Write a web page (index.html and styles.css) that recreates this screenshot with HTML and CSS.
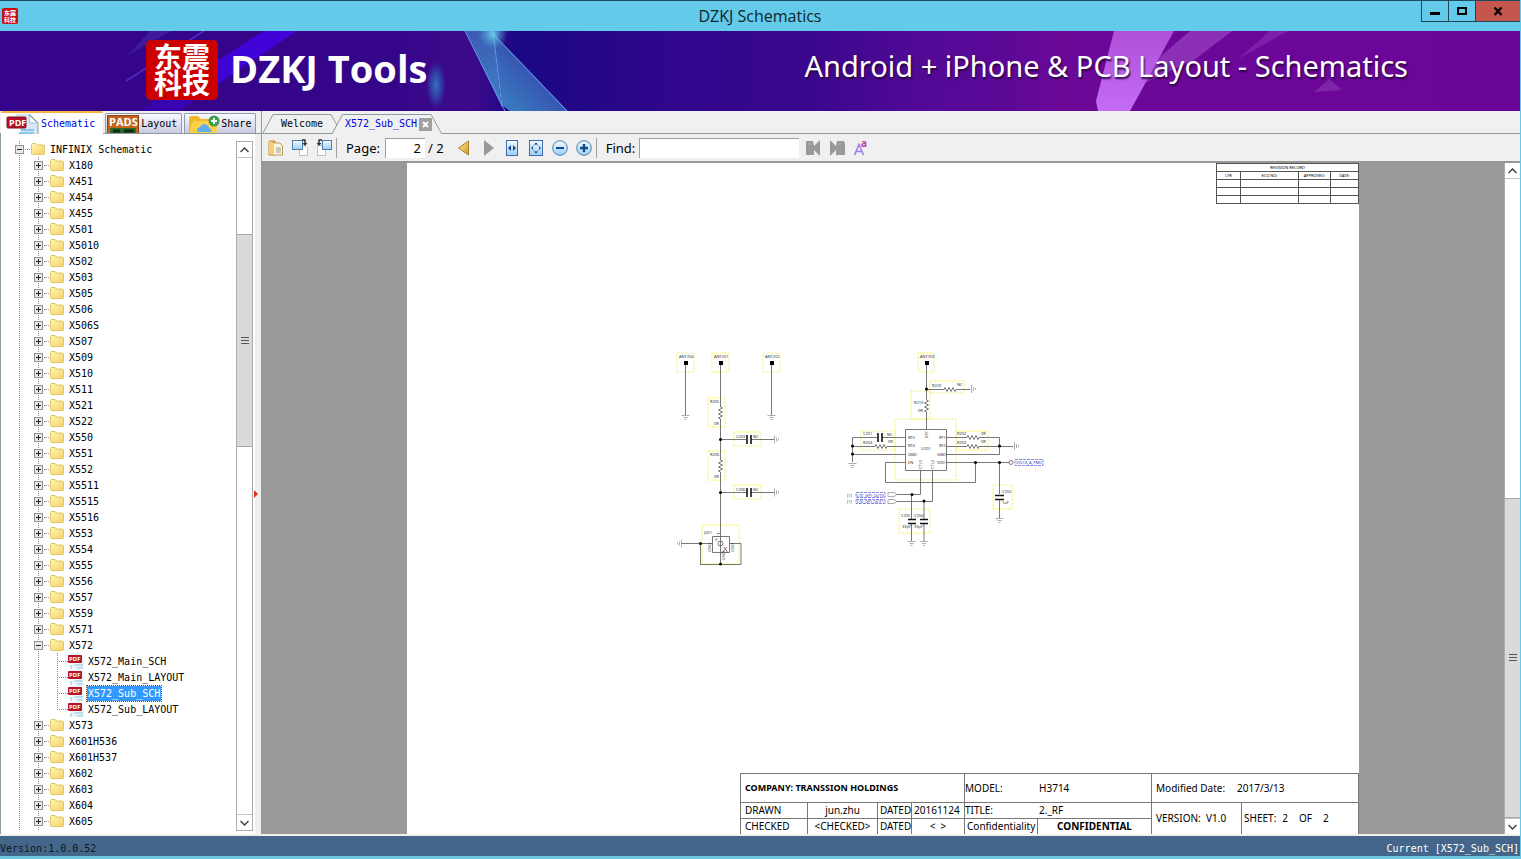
FILE: index.html
```html
<!DOCTYPE html>
<html lang="en">
<head>
    <meta charset="utf-8" />
    <title>DZKJ Schematics</title>
    <link rel="stylesheet" href="styles.css">
</head>
<body>
    <!-- shared icons -->
    <svg class="defs" width="0" height="0">
        <linearGradient id="folderFill" x1="0" y1="0" x2="1" y2="1">
            <stop offset="0" stop-color="#fff6b4" />
            <stop offset="1" stop-color="#f3d268" />
        </linearGradient>
        <linearGradient id="pageFill" x1="0" y1="0" x2="0" y2="1">
            <stop offset="0" stop-color="#f4fbff" />
            <stop offset="1" stop-color="#9dcdf5" />
        </linearGradient>
        <linearGradient id="goldFill" x1="0" y1="0" x2="1" y2="1">
            <stop offset="0" stop-color="#ffe9a0" />
            <stop offset="1" stop-color="#d09a28" />
        </linearGradient>
        <symbol id="folder" viewBox="0 0 14 12">
            <path d="M.5 10.500V1.500Q.5.500 1.500.500H5L6.500 2H12.500Q13.500 2 13.500 3V10.500Q13.500 11.500 12.500 11.500H1.500Q.5 11.500.5 10.500Z" fill="url(#folderFill)" stroke="#e4c468" />
        </symbol>
        <symbol id="pdf" viewBox="0 0 16 16">
            <path d="M3 0H12L15.500 3V15.500H3Z" fill="#e4f4fb" />
            <path d="M3 12V16M7 12H15M9 15H15" stroke="#8cc4dd" />
            <rect y="2" width="14" height="8" rx="1" fill="#b8122a" />
            <text x="1" y="8" font-size="6" font-weight="700" fill="#fff">PDF</text>
        </symbol>
    </svg>

    <header class="titlebar">
        <svg class="app-icon" width="16" height="16">
            <rect width="16" height="16" rx="2" fill="#cc0a10" />
            <text x="2" y="7">东震</text>
            <text x="2" y="14">科技</text>
        </svg>
        <h1>DZKJ Schematics</h1>
        <div class="window-buttons">
            <button type="button" aria-label="Minimize"><svg width="10" height="10"><rect y="6" width="10" height="3" /></svg></button>
            <button type="button" aria-label="Maximize"><svg width="10" height="10"><rect x="1" y="2" width="8" height="6" fill="none" stroke="#000" stroke-width="2" /></svg></button>
            <button type="button" class="close" aria-label="Close"><svg width="10" height="10"><path d="M1.500 1.500L8.500 9M8.500 1.500L1.500 9" stroke="#000" stroke-width="2.200" /></svg></button>
        </div>
    </header>

    <div class="banner">
        <svg class="banner-art" viewBox="0 0 1520 80" preserveAspectRatio="none">
            <defs>
                <linearGradient id="bannerFill">
                    <stop offset="0" stop-color="#34048a" />
                    <stop offset=".26" stop-color="#350589" />
                    <stop offset=".31" stop-color="#3d0a8c" />
                    <stop offset=".34" stop-color="#1b0784" />
                    <stop offset=".39" stop-color="#240786" />
                    <stop offset=".45" stop-color="#31068d" />
                    <stop offset=".53" stop-color="#39078c" />
                    <stop offset=".61" stop-color="#530a96" />
                    <stop offset=".66" stop-color="#5c0897" />
                    <stop offset=".7" stop-color="#6c0898" />
                    <stop offset="1" stop-color="#6b0599" />
                </linearGradient>
                <linearGradient id="shardBlue" x1="0" y1="0" x2="0" y2="1">
                    <stop offset="0" stop-color="#3c5bb4" />
                    <stop offset="1" stop-color="#3c82c4" />
                </linearGradient>
                <linearGradient id="shardDark" x1="1" y1="0" x2="0" y2="1">
                    <stop offset="0" stop-color="#33259a" />
                    <stop offset="1" stop-color="#3b86c6" />
                </linearGradient>
                <linearGradient id="shardPink" x1="0" y1="0" x2="0" y2="1">
                    <stop offset="0" stop-color="#b04fd8" />
                    <stop offset="1" stop-color="#c46cf4" />
                </linearGradient>
                <linearGradient id="beam" x1="1" y1="0" x2="0" y2="1">
                    <stop offset="0" stop-color="#4103d9" />
                    <stop offset=".6" stop-color="#3c04d4" />
                    <stop offset="1" stop-color="#36049e" />
                </linearGradient>
                <radialGradient id="glow">
                    <stop offset="0" stop-color="#2e74bf" />
                    <stop offset="1" stop-color="#2e74bf" stop-opacity="0" />
                </radialGradient>
                <radialGradient id="spark">
                    <stop offset="0" stop-color="#6fd0e8" />
                    <stop offset="1" stop-color="#4aa0d0" stop-opacity="0" />
                </radialGradient>
            </defs>
            <rect width="1520" height="80" fill="url(#bannerFill)" />
            <path d="M264 0H297L178 80H138Z" fill="url(#beam)" />
            <path d="M150 0H172L128 24Z" fill="#3f1a9a" />
            <path d="M204 0L126 50" stroke="#4a2ac0" stroke-width="2" />
            <path d="M465 0H493L501 74Z" fill="url(#shardBlue)" />
            <path d="M493 2L568 80H510L502 74Z" fill="url(#shardDark)" />
            <path d="M465 0L505 80M493 0L502 76M494 4L567 80" fill="none" stroke="#669af0" stroke-width="1" />
            <ellipse cx="436" cy="54" rx="10" ry="24" fill="url(#glow)" />
            <circle cx="493" cy="3" r="15" fill="url(#spark)" />
            <path d="M1114 0H1174L1130 80H1098L1096 70Z" fill="url(#shardPink)" />
            <path d="M1190 0H1232L1194 29L1136 56L1162 24Z" fill="#b463da" opacity=".45" />
            <path d="M1270 0H1288L1238 28Z" fill="#a050c8" opacity=".35" />
            <path d="M1314 61L1329 48L1342 59Z" fill="#8b38b2" opacity=".6" />
        </svg>
        <div class="logo">东震科技</div>
        <strong class="brand">DZKJ Tools</strong>
        <p class="slogan">Android + iPhone &amp; PCB Layout - Schematics</p>
    </div>

    <div class="main">
        <aside class="side">
            <nav class="side-tabs">
                <button type="button" class="side-tab active">
                    <svg width="34" height="20">
                        <path d="M10 0H24L32 8V20H14V14Z" fill="#d7e8f4" />
                        <path d="M23 0L32 9V20" fill="none" stroke="#8b9aa8" />
                        <path d="M23 1L31 9H24Z" fill="#fff" stroke="#a9bccb" />
                        <path d="M15 16H28M13 19H28" stroke="#8cc6ea" stroke-width="2" />
                        <rect x="1" y="3" width="19" height="11" rx="1" fill="#b90f24" stroke="#7d1422" />
                        <text x="3" y="12" font-size="9" font-weight="700" fill="#fff">PDF</text>
                    </svg>
                    Schematic
                </button>
                <button type="button" class="side-tab">
                    <svg width="33" height="20">
                        <rect x=".5" y="1.500" width="31" height="20" fill="#c6641c" stroke="#8b4411" />
                        <text x="2" y="12" font-size="11" font-weight="700" fill="#fff">PADS</text>
                        <path d="M3 14H29V20H3Z" fill="#2c6a2c" />
                        <path d="M6 17H13M17 17H27" stroke="#102a14" stroke-width="3" />
                    </svg>
                    Layout
                </button>
                <button type="button" class="side-tab">
                    <svg width="34" height="20">
                        <path d="M3 20V4Q3 2 5 2H12L15 5H30V20Z" fill="#f2b82b" />
                        <path d="M3 20L7 7H33L30 20Z" fill="#fdd04a" />
                        <path d="M12 18Q9 14 14 13Q17 8 21 11Q23 12 23 14Q27 15 25 18Z" fill="#5faeee" />
                        <circle cx="28" cy="7" r="5.500" fill="#38a046" />
                        <path d="M25 7H31M28 4V10" stroke="#fff" stroke-width="2" />
                    </svg>
                    Share
                </button>
            </nav>
            <div class="tree-panel">
                <ul class="tree">
                    <li>
                        <div class="row"><button type="button" class="toggle open" aria-label="Collapse"></button><svg class="folder"><use href="#folder" /></svg><a href="#">INFINIX Schematic</a></div>
                        <ul id="models"></ul>
                    </li>
                </ul>
                <div class="scrollbar">
                    <button type="button" aria-label="Scroll up"><svg width="9" height="6"><path d="M.5 5L4.500 1L8.500 5" /></svg></button>
                    <div class="track"><span class="before"></span><span class="thumb"></span><span class="after"></span></div>
                    <button type="button" aria-label="Scroll down"><svg width="9" height="6"><path d="M.5 1L4.500 5L8.500 1" /></svg></button>
                </div>
                <div class="splitter"><svg width="6" height="8"><path d="M1 0L5 4L1 8Z" fill="#e03020" /></svg></div>
            </div>
        </aside>

        <section class="viewer">
            <nav class="doc-tabs">
                <svg class="doc-shape" width="182" height="23" viewBox="0 0 182 23">
                    <path d="M0 22.500H71M1 22L11 3.500H69L75 14" />
                    <path d="M70.500 22L80.500 3.500H169L179.500 22.500H182" fill="#f0f0f0" />
                </svg>
                <button type="button" class="doc-tab">Welcome</button>
                <button type="button" class="doc-tab current">X572_Sub_SCH</button>
                <button type="button" class="doc-close" aria-label="Close tab"><svg width="7" height="7"><path d="M1 1L6 6M6 1L1 6" stroke="#fff" stroke-width="2" /></svg></button>
            </nav>

            <div class="toolbar">
                <button type="button" class="tool" aria-label="Open">
                    <svg width="16" height="16"><path d="M1 1H7V15H1Z" fill="#e3b34a" stroke="#c4923a" /><path d="M4 3L12 3L14.500 6V15H4Z" fill="#fdf7e1" stroke="#b79a5c" /><path d="M8 8H13M8 10H13M8 12H13" stroke="#9a9a8a" /><path d="M1 1L6 3V15L1 14Z" fill="#f4cf78" /></svg>
                </button>
                <button type="button" class="tool" aria-label="Rotate right">
                    <svg width="17" height="17"><path d="M7.500 6.500H12L15.500 9V16.500H7.500Z" fill="#fff" stroke="#b9c3cc" /><rect x=".5" y="1.500" width="10" height="9" fill="url(#pageFill)" stroke="#4c7cae" /><path d="M10 1H13V4" fill="none" stroke="#333" stroke-width="1.500" /><path d="M10.500 4H15.500L13 7Z" fill="#333" /></svg>
                </button>
                <button type="button" class="tool" aria-label="Rotate left">
                    <svg width="17" height="17"><path d="M1.500 6.500H7L9.500 9V16.500H1.500Z" fill="#fff" stroke="#b9c3cc" /><rect x="6.500" y="1.500" width="9" height="9" fill="url(#pageFill)" stroke="#4c7cae" /><path d="M6 1H3V4" fill="none" stroke="#333" stroke-width="1.500" /><path d="M.5 4H5.500L3 7Z" fill="#333" /></svg>
                </button>
                <span class="divider"></span>
                <label for="page">Page:</label>
                <input type="text" id="page" value="2" />
                <span class="total">/ 2</span>
                <button type="button" class="tool" aria-label="Previous page">
                    <svg width="16" height="16"><path d="M12.500 1V15L2.500 8Z" fill="url(#goldFill)" stroke="#ad8228" /></svg>
                </button>
                <button type="button" class="tool" aria-label="Next page">
                    <svg width="16" height="16"><path d="M4 0V16L14 8Z" fill="#999" /></svg>
                </button>
                <button type="button" class="tool" aria-label="Fit width">
                    <svg width="16" height="16"><rect x="2.500" y=".5" width="11" height="15" fill="url(#pageFill)" stroke="#3c6cae" /><path d="M7 5V11L4 8ZM9 5V11L12 8Z" fill="#124a8c" /></svg>
                </button>
                <button type="button" class="tool" aria-label="Fit page">
                    <svg width="16" height="16"><rect x="1.500" y=".5" width="13" height="15" fill="url(#pageFill)" stroke="#3c6cae" /><path d="M8 2.500L10 4.500H6ZM8 13.500L10 11.500H6ZM3 8L5 6V10ZM13 8L11 6V10Z" fill="#124a8c" /><circle cx="8" cy="8" r="3.500" fill="none" stroke="#3f74b4" stroke-dasharray="1 1.500" /></svg>
                </button>
                <button type="button" class="tool" aria-label="Zoom out">
                    <svg width="16" height="16"><circle cx="8" cy="8" r="7.300" fill="url(#pageFill)" stroke="#4682b4" /><path d="M4 8H12" stroke="#104a88" stroke-width="2" /></svg>
                </button>
                <button type="button" class="tool" aria-label="Zoom in">
                    <svg width="16" height="16"><circle cx="8" cy="8" r="7.300" fill="url(#pageFill)" stroke="#4682b4" /><path d="M4 8H12M8 4V12" stroke="#104a88" stroke-width="2.400" /></svg>
                </button>
                <span class="divider"></span>
                <label for="find">Find:</label>
                <input type="text" id="find" />
                <button type="button" class="tool" aria-label="Find previous">
                    <svg width="16" height="16"><path d="M1 1H8L9 6L15 0V16L9 10V15H1Z" fill="#999" /><path d="M4 4H6" stroke="#c4c4c4" /></svg>
                </button>
                <button type="button" class="tool" aria-label="Find next">
                    <svg width="16" height="16"><path d="M1 0L7 6L8 1H15L16 4V15H7V10L1 16Z" fill="#999" /><path d="M10 4H12" stroke="#c4c4c4" /></svg>
                </button>
                <button type="button" class="tool" aria-label="Match case">
                    <svg width="16" height="16"><path d="M1.500 15L6 4.500L10.500 15M3 11.500H9" fill="none" stroke="#9a7cf0" stroke-width="1.500" /><text x="8" y="7" font-size="10" font-weight="700" fill="#b23a9a">a</text></svg>
                </button>
            </div>

            <div class="canvas">
                <div class="canvas-inner">
                    <article class="sheet">
                        <table class="revision">
                            <colgroup><col class="ltr"><col class="eco"><col class="approved"><col></colgroup>
                            <tr><th colspan="4">REVISION RECORD</th></tr>
                            <tr><td>LTR</td><td>ECO NO:</td><td>APPROVED:</td><td>DATE:</td></tr>
                            <tr><td></td><td></td><td></td><td></td></tr>
                            <tr><td></td><td></td><td></td><td></td></tr>
                            <tr><td></td><td></td><td></td><td></td></tr>
                        </table>

                        <svg class="drawing" viewBox="407 204 952 560" preserveAspectRatio="xMidYMin meet">
                            <defs>
                                <path id="res" d="M0 0V3L2 4L-2 6L2 8L-2 10L2 12L-2 14L0 15V18" />
                                <path id="resH" d="M0 0H3L4 -2L6 2L8 -2L10 2L12 -2L14 2L15 0H18" />
                                <path id="gnd" d="M-4 .5H4M-2 2.500H2M-1 4.500H1" />
                                <path id="gndH" d="M.5 -4V4M2.500 -2V2M4.500 -1V1" />
                            </defs>
                            <!-- component outlines -->
                            <g class="outline">
                                <path d="M677 353H694V372H677ZM712 353H729V372H712ZM763 353H780V372H763ZM918 353H934V372H918Z" />
                                <path d="M708 398H725V427H708ZM708 451H725V480H708ZM734 432H761V446H734ZM734 485H761V499H734ZM702 525H739V564H702Z" />
                                <path d="M930 381H964V393H930ZM911 391H930V419H911ZM895 419H956V480H895ZM861 431H895V450H861ZM956 431H988V450H956ZM993 485H1012V509H993ZM899 509H930V533H899Z" />
                            </g>
                            <!-- antennas and left chain -->
                            <g class="wire">
                                <path d="M685.500 363V415M771.500 363V415M720.500 363V404M720.500 422V457M720.500 475V564" />
                                <path d="M720 439.500H746M751 439.500H774M720 492.500H746M751 492.500H774" />
                                <path d="M681 543.500H712M700.500 543V564.500H741V543.500H729" />
                                <path d="M712.500 536.500H729.500V552.500H712.500Z" />
                                <circle cx="720.500" cy="543.500" r="2.500" />
                                <path d="M724 547L728 553M727 547L722 553" />
                                <use href="#res" x="720.500" y="404" />
                                <use href="#res" x="720.500" y="457" />
                            </g>
                            <g class="ground">
                                <use href="#gnd" x="685.500" y="415" />
                                <use href="#gnd" x="771.500" y="415" />
                                <use href="#gndH" x="774" y="439.500" />
                                <use href="#gndH" x="774" y="492.500" />
                                <use href="#gndH" transform="translate(682 543.500) scale(-1 1)" />
                                <use href="#gndH" x="971" y="389" />
                                <use href="#gndH" x="1014" y="446" />
                                <use href="#gnd" x="852.500" y="463" />
                                <use href="#gnd" x="911.500" y="541" />
                                <use href="#gnd" x="924" y="541" />
                                <use href="#gnd" x="999.500" y="518" />
                            </g>
                            <!-- switch U201 -->
                            <g class="wire">
                                <path d="M926.500 363V397M926.500 415V430M926 389.500H941M959 389.500H970" />
                                <path d="M905.500 429.500H946.500V470.500H905.500Z" />
                                <path d="M852.500 462V437.500H877M882 437.500H905M853 446.500H872M890 446.500H905M853 454.500H905" />
                                <path d="M946 437.500H964M982 437.500H999.500V454.500H946M946 446.500H964M982 446.500H1013" />
                                <path d="M946 462.500H1009M905 462.500H885.500V482.500H975.500V462.500M999.500 462V494M999.500 499V518" />
                                <path d="M920.500 470V494.500H896M932.500 470V501.500H896M911.500 494V519M911.500 524V541M924 501V519M924 524V541" />
                                <path class="port" d="M888 492.500H894L897 494.500L894 496.500H888ZM888 499.500H894L897 501.500L894 503.500H888Z" />
                                <circle cx="1011" cy="462.500" r="2" />
                                <use href="#res" x="926.500" y="397" />
                                <use href="#resH" x="941" y="389.500" />
                                <use href="#resH" x="872" y="446.500" />
                                <use href="#resH" x="964" y="437.500" />
                                <use href="#resH" x="964" y="446.500" />
                            </g>
                            <!-- capacitor plates -->
                            <g class="plate">
                                <path d="M747 435V444M751 435V444M747 488V497M751 488V497M878 433V442M882 433V442" />
                                <path d="M908 519.500H916M908 523.500H916M920 519.500H928M920 523.500H928M995 495.500H1004M995 499.500H1004" />
                            </g>
                            <!-- pads and junctions -->
                            <g class="dot">
                                <path d="M684 361H688V365H684ZM719 361H723V365H719ZM770 361H774V365H770ZM925 361H929V365H925Z" />
                                <circle cx="720.500" cy="439.500" r="1.500" /><circle cx="720.500" cy="492.500" r="1.500" /><circle cx="720.500" cy="564" r="1.500" />
                                <circle cx="700.500" cy="543.500" r="1.500" /><circle cx="926.500" cy="389" r="1.500" /><circle cx="852.500" cy="446" r="1.500" />
                                <circle cx="852.500" cy="454" r="1.500" /><circle cx="999.500" cy="446" r="1.500" /><circle cx="975.500" cy="462.500" r="1.500" />
                                <circle cx="999.500" cy="462.500" r="1.500" /><circle cx="912" cy="494.500" r="1.500" /><circle cx="924" cy="501" r="1.500" />
                            </g>
                            <g class="note">
                                <text x="679" y="358">ANT204</text><text x="714" y="358">ANT201</text><text x="765" y="358">ANT202</text><text x="920" y="358">ANT203</text>
                                <text x="710" y="403">R205</text><text x="714" y="425">0R</text><text x="710" y="456">R206</text><text x="714" y="478">0R</text>
                                <text x="736" y="438">C203</text><text x="753" y="438">NC</text><text x="736" y="491">C206</text><text x="753" y="491">NC</text>
                                <text x="704" y="534">J201</text>
                                <text transform="translate(711 552) rotate(-90)">GND</text><text transform="translate(734 552) rotate(-90)">GND</text>
                                <text transform="translate(720 535) rotate(-90)">1</text><text x="715" y="541">V</text><text transform="translate(725 560) rotate(-90)">GND</text>
                                <text x="932" y="387">R220</text><text x="957" y="386">NC</text><text x="914" y="404">R210</text><text x="918" y="412">0R</text>
                                <text x="863" y="435">C201</text><text x="887" y="436">NC</text><text x="863" y="444">R204</text><text x="888" y="443">0R</text>
                                <text x="908" y="439">RF3</text><text x="908" y="447">RF4</text><text x="908" y="456">GND</text><text x="908" y="464">EN</text>
                                <text x="939" y="439">RF1</text><text x="939" y="447">RF2</text><text x="937" y="456">GND</text><text x="937" y="464">VDD</text>
                                <text transform="translate(928 438) rotate(-90)">RFC</text><text x="921" y="450">U201</text>
                                <text transform="translate(922 469) rotate(-90)">CTL1</text><text transform="translate(934 469) rotate(-90)">CTL2</text>
                                <text x="957" y="435">R202</text><text x="981" y="435">0R</text><text x="957" y="444">R203</text><text x="981" y="443">0R</text>
                                <text x="1002" y="493">C202</text><text x="1002" y="504">1uF</text>
                                <text x="901" y="517">C205</text><text x="914" y="517">C204</text><text x="902" y="528">33pF</text><text x="914" y="528">33pF</text>
                                <text class="net" x="847" y="497">[1]</text><text class="net" x="847" y="503">[1]</text>
                                <text class="net" x="857" y="497">LTE_GPI_OUT0</text><text class="net" x="857" y="503">LTE_GPI_OUT1</text>
                                <text class="net" x="1016" y="464">VIO18_A_PMU</text>
                            </g>
                            <path class="netbox" d="M856 492.500H885V497.500H856ZM856 499.500H885V503.500H856ZM1015 459.500H1043V465.500H1015Z" />
                        </svg>

                        <table class="title-block">
                            <colgroup><col class="c-name"><col class="c-value"><col class="c-dated"><col class="c-stamp"><col class="c-model"><col class="c-conf"><col class="c-version"><col class="c-sheet"></colgroup>
                            <tr class="tall">
                                <th colspan="4" class="company">COMPANY: TRANSSION HOLDINGS</th>
                                <td colspan="2" class="pair"><span>MODEL:</span>H3714</td>
                                <td colspan="2" class="modified"><span>Modified Date:</span>2017/3/13</td>
                            </tr>
                            <tr>
                                <td>DRAWN</td>
                                <td class="center">jun.zhu</td>
                                <td class="tight">DATED</td>
                                <td class="tight">20161124</td>
                                <td colspan="2" class="pair"><span>TITLE:</span>2._RF</td>
                                <td rowspan="2">VERSION:&nbsp; V1.0</td>
                                <td rowspan="2" class="tight sheet-no"><span>SHEET:</span><span>2</span><span>OF</span><span>2</span></td>
                            </tr>
                            <tr>
                                <td>CHECKED</td>
                                <td class="center">&lt;CHECKED&gt;</td>
                                <td class="tight">DATED</td>
                                <td class="center">&lt;&nbsp; &gt;</td>
                                <td class="tight">Confidentiality</td>
                                <th class="center">CONFIDENTIAL</th>
                            </tr>
                        </table>
                    </article>
                </div>
                <div class="scrollbar page-scroll">
                    <button type="button" aria-label="Page up"><svg width="9" height="6"><path d="M.5 5L4.500 1L8.500 5" /></svg></button>
                    <div class="track"><span class="before"></span><span class="thumb"></span></div>
                    <button type="button" aria-label="Page down"><svg width="9" height="6"><path d="M.5 1L4.500 5L8.500 1" /></svg></button>
                </div>
            </div>
        </section>
    </div>

    <footer class="statusbar">
        <span class="version">Version:1.0.0.52</span>
        <span>Current [X572_Sub_SCH]</span>
    </footer>

    <script src="script.js"></script>
</body>
</html>
```

FILE: script.js
```js
const models = [
    'X180', 'X451', 'X454', 'X455', 'X501', 'X5010', 'X502', 'X503', 'X505', 'X506', 'X506S',
    'X507', 'X509', 'X510', 'X511', 'X521', 'X522', 'X550', 'X551', 'X552', 'X5511', 'X5515',
    'X5516', 'X553', 'X554', 'X555', 'X556', 'X557', 'X559', 'X571', 'X572', 'X573', 'X601H536',
    'X601H537', 'X602', 'X603', 'X604', 'X605', ''
];
const files = {
    X572: ['X572_Main_SCH', 'X572_Main_LAYOUT', 'X572_Sub_SCH', 'X572_Sub_LAYOUT']
};
const selected = 'X572_Sub_SCH';

const list = document.getElementById('models');
models.forEach(name => {
    const open = files[name];
    const li = document.createElement('li');
    li.innerHTML = `
        <div class="row">
            <button type="button" class="toggle ${open ? 'open' : ''}" aria-label="Toggle ${name}"></button>
            <svg class="folder"><use href="#folder" /></svg>
            <a href="#">${name}</a>
        </div>
    `;
    if (open) {
        const ul = document.createElement('ul');
        ul.className = 'files';
        ul.innerHTML = open.map(file => `
            <li class="row">
                <svg class="pdf"><use href="#pdf" /></svg>
                <a href="#" class="${file === selected ? 'selected' : ''}">${file}</a>
            </li>
        `).join('');
        li.appendChild(ul);
    }
    list.appendChild(li);
});
```

FILE: styles.css
```css
* {
    box-sizing: border-box;
}

body {
    margin: 0;
    height: 100vh;
    display: flex;
    flex-direction: column;
    overflow: hidden;
    background: #f0f0f0;
    border-right: 1px solid #64cae9;
    font: 10px/16px "DejaVu Sans Mono", "Noto Sans CJK SC", monospace;
    color: #000;
}

button {
    margin: 0;
    padding: 0;
    border: 0;
    background: none;
    font: inherit;
    color: inherit;
}

svg {
    display: block;
    flex: none;
}

svg text {
    font-family: "Open Sans", "Noto Sans CJK SC", sans-serif;
}

.defs {
    position: absolute;
}

/* window title */
.titlebar {
    flex: none;
    height: 31px;
    display: flex;
    align-items: center;
    position: relative;
    border-top: 1px solid #1c4a60;
    background: #64cae9;
}

.titlebar h1 {
    flex: 1;
    margin: 0;
    text-align: center;
    font: 400 16px/28px "Open Sans", sans-serif;
    color: #10242c;
}

.app-icon {
    position: absolute;
    left: 2px;
    overflow: visible;
    fill: #fff;
    font-size: 6px;
    font-weight: 700;
}

.window-buttons {
    position: absolute;
    top: 0;
    right: 0;
    display: flex;
    border: 1px solid #1f4454;
    border-width: 0 0 1px 1px;
}

.window-buttons button {
    width: 27px;
    height: 20px;
    display: flex;
    align-items: center;
    justify-content: center;
    border-right: 1px solid #1f4454;
}

.window-buttons .close {
    width: 44px;
    border-right: 0;
    background: #c4564e;
}

/* banner */
.banner {
    flex: none;
    height: 80px;
    position: relative;
    display: flex;
    align-items: center;
    padding: 0 112px 2px 146px;
    color: #fff;
}

.banner-art {
    position: absolute;
    inset: 0;
    width: 100%;
    height: 100%;
}

.logo,
.brand,
.slogan {
    position: relative;
}

.logo {
    width: 72px;
    height: 60px;
    padding: 3px 8px;
    border-radius: 5px;
    background: #cc0000;
    font: 700 28px/26px "Noto Sans CJK SC", sans-serif;
    word-break: break-all;
}

.brand {
    margin: 0 0 4px 12px;
    font: 700 38px/40px "Open Sans", sans-serif;
}

.slogan {
    margin: 0 0 8px auto;
    font: 400 29px/40px "Noto Sans", sans-serif;
    text-shadow: 1px 2px 2px #2a0440;
    white-space: nowrap;
}

/* body */
.main {
    flex: 1;
    min-height: 0;
    display: flex;
    padding-bottom: 2px;
}

.side {
    flex: none;
    width: 262px;
    display: flex;
    flex-direction: column;
    border-right: 1px solid #8c9aa2;
}

.side-tabs {
    flex: none;
    height: 23px;
    display: flex;
    gap: 2px;
    align-items: flex-end;
    padding-left: 1px;
    border-bottom: 1px solid #8c9aa2;
}

.side-tab {
    height: 20px;
    display: flex;
    align-items: center;
    gap: 1px;
    padding: 0 4px 0 1px;
    overflow: hidden;
    border: 1px solid #8c9ab2;
    border-bottom: 0;
    border-radius: 2px 2px 0 0;
    background: linear-gradient(#fafafc, #c8cce2);
}

.side-tab.active {
    height: 23px;
    margin-bottom: -1px;
    padding: 0 8px 0 5px;
    border: 0;
    border-top: 2px solid #f8b040;
    background: #fff;
    color: #0000e0;
}

.tree-panel {
    flex: 1;
    min-height: 0;
    display: flex;
    padding: 7px 0 3px 15px;
    border-left: 1px solid #8c9aa2;
    background: linear-gradient(to right, #fff 254px, #f0f0f0 254px);
}

.tree {
    flex: 1;
    overflow: hidden;
    margin-left: -1px;
}

.tree,
.tree ul {
    padding: 0;
    margin-top: 0;
    margin-bottom: 0;
    list-style: none;
    background: repeating-linear-gradient(#888 0 1px, transparent 1px 2px) 4px 0 / 1px 100% no-repeat;
}

.tree ul {
    margin-left: 19px;
}

.tree .files {
    background-size: 1px 56px;
}

.row {
    height: 16px;
    display: flex;
    align-items: center;
}

.toggle {
    flex: none;
    width: 9px;
    height: 9px;
    border: 1px solid #919191;
    background:
        linear-gradient(#222, #222) 1px 3px / 5px 1px no-repeat,
        linear-gradient(#222, #222) 3px 1px / 1px 5px no-repeat,
        #e8e8e8;
}

.toggle.open {
    background: linear-gradient(#222, #222) 1px 3px / 5px 1px no-repeat, #e8e8e8;
}

.row .folder {
    width: 14px;
    height: 12px;
    margin: 0 4px 0 7px;
}

.row .pdf {
    width: 16px;
    height: 16px;
    margin: 0 3px 0 10px;
}

.files .row {
    padding-left: 5px;
    background: repeating-linear-gradient(to right, #888 0 1px, transparent 1px 2px) 4px 8px / 11px 1px no-repeat;
}

li > div.row {
    background: repeating-linear-gradient(to right, #888 0 1px, transparent 1px 2px) 10px 8px / 6px 1px no-repeat;
}

.row a {
    padding: 0 1px;
    line-height: 15px;
    color: #000;
    text-decoration: none;
}

.row .selected {
    background: #3399ff;
    color: #fff;
    outline: 1px dotted #804000;
}

.scrollbar {
    flex: none;
    width: 17px;
    display: flex;
    flex-direction: column;
    border: 1px solid #acacac;
    background: #fff;
}

.scrollbar button {
    flex: none;
    height: 16px;
    display: flex;
    align-items: center;
    justify-content: center;
    border: 1px solid #c4c4c4;
    border-width: 0 0 1px;
}

.scrollbar button:last-child {
    border-width: 1px 0 0;
}

.scrollbar path {
    fill: none;
    stroke: #444;
    stroke-width: 1.5;
}

.track {
    flex: 1;
    display: flex;
    flex-direction: column;
}

.before {
    flex: 76;
}

.after {
    flex: 369;
}

.thumb {
    flex: 213;
    border: 1px solid #a8a8a8;
    border-width: 1px 0;
    background: linear-gradient(#555 0 1px, transparent 1px 3px, #555 3px 4px, transparent 4px 6px, #555 6px 7px) center / 8px 7px no-repeat, #dadada;
}

.splitter {
    width: 8px;
    display: flex;
    align-items: center;
    padding-top: 16px;
}

/* document viewer */
.viewer {
    flex: 1;
    min-width: 0;
    display: flex;
    flex-direction: column;
}

.doc-tabs {
    flex: none;
    height: 23px;
    position: relative;
    display: flex;
    align-items: center;
    padding: 3px 0 0 18px;
    background: linear-gradient(#8c9aa2, #8c9aa2) 182px 22px / 100% 1px no-repeat;
}

.doc-shape {
    position: absolute;
    left: 0;
    top: 0;
    fill: none;
    stroke: #8c9aa2;
}

.doc-tab {
    position: relative;
    width: 44px;
}

.doc-tab.current {
    width: 74px;
    margin-left: 20px;
    color: #0000e0;
}

.doc-close {
    position: relative;
    width: 13px;
    height: 13px;
    display: flex;
    align-items: center;
    justify-content: center;
    margin-left: 1px;
    background: #a0a0a0;
}

.toolbar {
    flex: none;
    height: 29px;
    display: flex;
    align-items: center;
    gap: 8px;
    padding-left: 6px;
    border-bottom: 2px solid #969696;
    font: 13px/20px "Noto Sans", sans-serif;
}

.tool {
    width: 16px;
    height: 17px;
}

.tool svg {
    overflow: visible;
}

.toolbar input {
    height: 20px;
    padding: 0 4px;
    border: 1px solid #a0a0a0;
    border-width: 1px 0 0 1px;
    background: #fff;
    font: inherit;
}

#page {
    width: 40px;
    margin-left: -3px;
    text-align: right;
}

#find {
    width: 160px;
    margin: 0 -2px 0 -4px;
}

.total {
    margin: 0 4px 0 -5px;
}

.divider {
    width: 1px;
    height: 20px;
    margin: 0 1px 0 -4px;
    background: #a0a0a0;
}

.canvas {
    flex: 1;
    min-height: 0;
    display: flex;
    background: #999;
}

.canvas-inner {
    flex: 1;
    display: flex;
    justify-content: center;
}

.sheet {
    width: 100%;
    max-width: 952px;
    display: flex;
    flex-direction: column;
    overflow: hidden;
    background: #fff;
    font-family: "Noto Sans", sans-serif;
}

.page-scroll {
    width: 16px;
    border-width: 0 0 0 1px;
}

.page-scroll .before,
.page-scroll .thumb {
    flex: 1;
}

.revision {
    flex: none;
    align-self: flex-end;
    width: 143px;
    border-collapse: collapse;
    table-layout: fixed;
    font-size: 4px;
    line-height: 4px;
}

.revision th,
.revision td {
    height: 8px;
    padding: 0;
    border: 1px solid #555;
    font-weight: 400;
    text-align: center;
}

.ltr {
    width: 24px;
}

.eco {
    width: 58px;
}

.approved {
    width: 32px;
}

.drawing {
    flex: 1;
    width: 100%;
    min-height: 0;
}

.outline {
    fill: none;
    stroke: #f6f27a;
    stroke-dasharray: 3 1;
}

.wire,
.ground {
    fill: none;
    stroke: #555;
    stroke-width: .8;
}

.ground,
.port {
    stroke: #999;
}

.plate {
    fill: none;
    stroke: #111;
    stroke-width: 1.6;
}

.note text {
    font-size: 4px;
    fill: #222;
}

.note .net {
    fill: #2a2ab0;
}

.netbox {
    fill: none;
    stroke: #6868d8;
    stroke-width: .8;
    stroke-dasharray: 3 1;
}

.title-block {
    flex: none;
    align-self: flex-end;
    width: 619px;
    border-collapse: collapse;
    table-layout: fixed;
    font-size: 10px;
    line-height: 14px;
}

.title-block th,
.title-block td {
    height: 16px;
    padding: 0 4px;
    border: 1px solid #777;
    border-bottom: 0;
    text-align: left;
    white-space: nowrap;
}

.title-block tr.tall > * {
    height: 29px;
}

.title-block .company {
    font-size: 9px;
}

.title-block .center {
    padding: 0;
    text-align: center;
}

.title-block .tight {
    padding: 0 2px;
}

.title-block .pair {
    padding: 0;
}

.pair span {
    display: inline-block;
    width: 74px;
}

.modified span {
    display: inline-block;
    width: 81px;
}

.sheet-no span {
    margin-right: 11px;
}

.sheet-no span:first-child {
    margin-right: 6px;
}

.c-name {
    width: 67px;
}

.c-value {
    width: 70px;
}

.c-dated {
    width: 34px;
}

.c-stamp {
    width: 53px;
}

.c-model {
    width: 73px;
}

.c-conf {
    width: 114px;
}

.c-version {
    width: 90px;
}

/* status bar */
.statusbar {
    flex: none;
    height: 23px;
    display: flex;
    justify-content: space-between;
    padding: 5px 1px 0 0;
    border-bottom: 3px solid #6cc6e0;
    background: #44668a;
    color: #fff;
}

.version {
    color: #0c1620;
}
```
